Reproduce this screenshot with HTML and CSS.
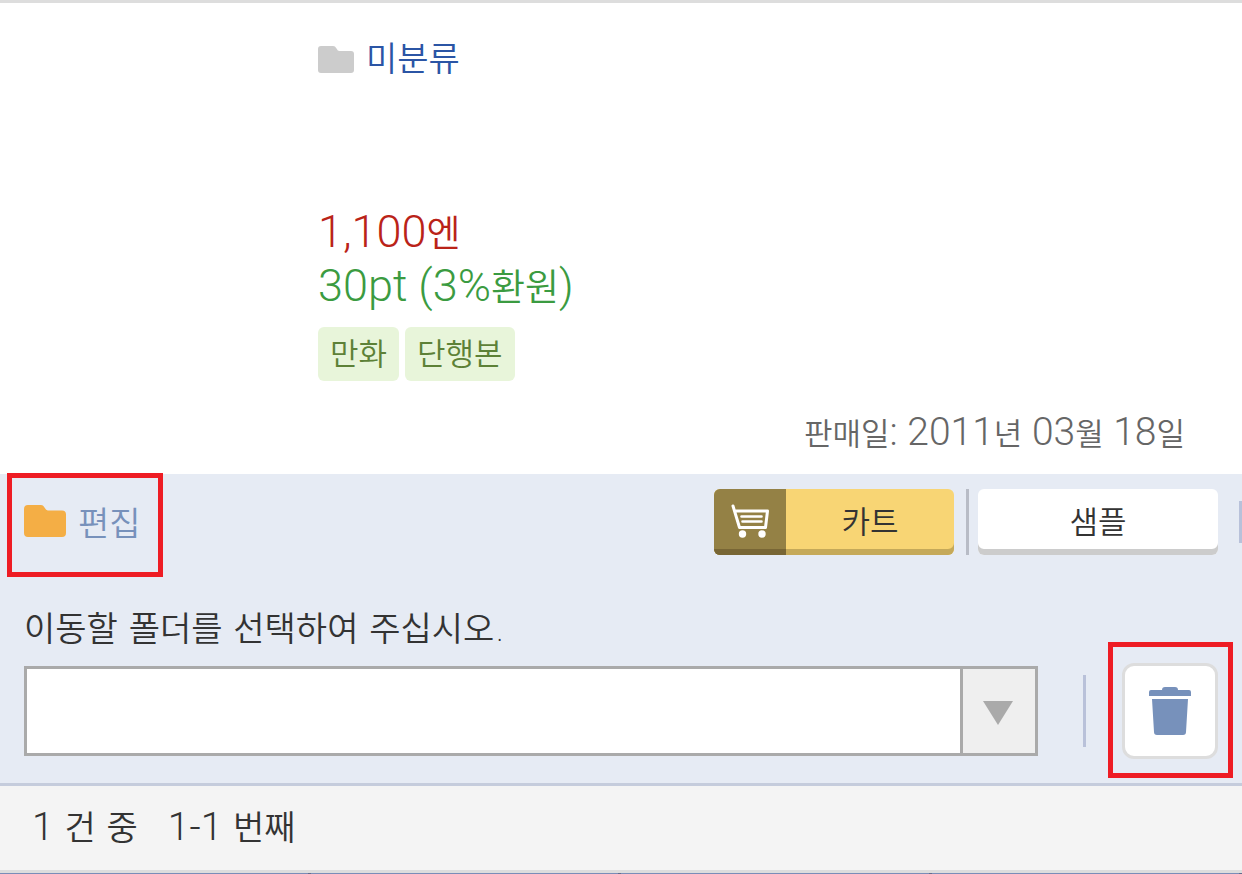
FILE: index.html
```
<!DOCTYPE html>
<html lang="ko">
<head>
  <meta charset="UTF-8">
  <meta name="viewport" content="width=device-width, initial-scale=1">
  <title>미분류</title>
  <link rel="stylesheet" href="styles.css">
</head>
<body>
  <main class="item">
    <div class="info">
      <a class="category" href="#">
        <svg width="36" height="27" viewBox="0 0 36 27"><path fill="#ccc" d="M3 0h12c1.500 0 2.500.8 3.500 2.500 1 1.700 1.500 2.500 3 2.500H33a3 3 0 0 1 3 3v16a3 3 0 0 1-3 3H3a3 3 0 0 1-3-3V3a3 3 0 0 1 3-3z"/></svg>
        <span>미분류</span>
      </a>
      <p class="price">1,100<span class="unit">엔</span></p>
      <p class="point">30pt (3%<span class="unit">환원</span>)</p>
      <div class="tags">
        <span class="tag">만화</span>
        <span class="tag">단행본</span>
      </div>
    </div>
    <p class="date"><span class="unit">판매일</span>: 2011<span class="unit">년</span> 03<span class="unit">월</span> 18<span class="unit">일</span></p>
  </main>

  <section class="panel">
    <div class="toolbar">
      <button class="edit-btn mark" type="button">
        <svg width="42" height="32" viewBox="0 0 42 32"><path fill="#f4ae45" d="M4 0h13c1.500 0 2.300.7 3.300 2.300C21.500 4.300 22.500 5.500 24 5.500h14a4 4 0 0 1 4 4V28a4 4 0 0 1-4 4H4a4 4 0 0 1-4-4V4a4 4 0 0 1 4-4z"/></svg>
        <span>편집</span>
      </button>
      <div class="actions">
        <button class="btn cart-btn" type="button">
          <span class="cart-icon">
            <svg width="38" height="34" viewBox="0 0 38 34" fill="none" stroke="#fff" stroke-linecap="round" stroke-linejoin="round">
              <path stroke-width="3" d="M2 2l6.500 21.500h26L36.500 7H5"/>
              <path stroke-width="2.600" d="M10.500 12.500h20M11.500 17.500h19"/>
              <circle cx="11.500" cy="30" r="3.700" fill="#fff" stroke="none"/>
              <circle cx="31" cy="30" r="3.700" fill="#fff" stroke="none"/>
            </svg>
          </span>
          <span class="btn-text">카트</span>
        </button>
        <span class="divider"></span>
        <button class="btn sample-btn" type="button">샘플</button>
      </div>
      <span class="edge"></span>
    </div>

    <label class="folder-label" for="folder">이동할 폴더를 선택하여 주십시오.</label>
    <div class="move-row">
      <div class="select-box">
        <select id="folder"><option></option></select>
        <span class="arrow"><svg width="30" height="24" viewBox="0 0 30 24"><path fill="#aaa" d="M0 0h30L15 24z"/></svg></span>
      </div>
      <span class="line"></span>
      <div class="trash-wrap mark">
        <button class="trash-btn" type="button" aria-label="삭제">
          <svg width="42" height="48" viewBox="0 0 42 48" fill="#7791bb"><path d="M2 3h11c0-2 1-3 3-3h10c2 0 3 1 3 3h11a2 2 0 0 1 2 2v4H0V5a2 2 0 0 1 2-2zM3 12h36l-2 33a3 3 0 0 1-3 3H8a3 3 0 0 1-3-3z"/></svg>
        </button>
      </div>
    </div>
  </section>

  <footer class="count"><span><span class="num">1</span> 건 중</span> <span><span class="num">1-1</span> 번째</span></footer>
  <nav class="tabs"><span></span><span></span><span></span><span></span></nav>
</body>
</html>
```
FILE: styles.css
```
* {
  box-sizing: border-box;
}

body {
  margin: 0;
  overflow-x: hidden;
  font-family: "DejaVu Sans", "Noto Sans CJK KR", sans-serif;
  font-weight: 350;
  color: #333;
  background: #fff;
}

p {
  margin: 0;
}

svg {
  display: block;
}

button {
  padding: 0;
  border: none;
  font: inherit;
  cursor: pointer;
}

.item {
  border-top: 3px solid #ddd;
  padding: 31px 57px 18px 318px;
}

.category {
  display: inline-flex;
  align-items: center;
  gap: 12px;
  height: 50px;
  font-size: 34px;
  line-height: 50px;
  color: #2b55a5;
  text-decoration: none;
}

.price,
.point {
  font-family: Roboto, "Noto Sans CJK KR", sans-serif;
  font-size: 45px;
  line-height: 54px;
}

.unit {
  font-size: 37px;
  line-height: 1;
}

.num {
  font-family: Roboto, sans-serif;
  font-size: 39px;
  line-height: 1;
}

.price {
  margin-top: 121px;
  color: #ba2318;
}

.point {
  color: #3b9b41;
}

.tags {
  display: flex;
  gap: 6px;
  margin-top: 14px;
}

.tag {
  padding: 0 12px;
  border-radius: 6px;
  font-size: 31px;
  line-height: 54px;
  color: #5d8137;
  background: #e8f5da;
}

.date {
  margin-top: 27px;
  font-family: Roboto, "Noto Sans CJK KR", sans-serif;
  font-size: 39px;
  line-height: 48px;
  text-align: right;
  color: #666;
}

.date .unit {
  font-size: 31px;
}

.panel {
  padding: 15px 24px 24px;
  border-bottom: 3px solid #c5ccdc;
  background: #e6ebf4;
}

.toolbar {
  position: relative;
  display: flex;
  justify-content: space-between;
}

.edit-btn {
  display: flex;
  align-items: center;
  gap: 12px;
  height: 64px;
  font-size: 34px;
  color: #7791bb;
  background: none;
}

.mark {
  position: relative;
}

.mark::after {
  content: "";
  position: absolute;
  border: 5px solid #ee1c24;
  pointer-events: none;
}

.edit-btn::after {
  inset: -16px -22px -24px -17px;
}

.actions {
  display: flex;
}

.btn {
  width: 240px;
  height: 66px;
  border-radius: 6px;
  font-size: 31px;
  color: #333;
  overflow: hidden;
}

.cart-btn {
  display: flex;
  background: #f8d574;
  box-shadow: inset 0 -6px #c5a959;
}

.cart-icon {
  display: flex;
  align-items: center;
  justify-content: center;
  width: 72px;
  height: 66px;
  padding-bottom: 3px;
  background: #948145;
  box-shadow: inset 0 -6px #786635;
}

.btn-text {
  flex: 1;
  line-height: 66px;
}

.divider {
  width: 3px;
  margin: 0 9px 0 12px;
  background: #b8bcc6;
}

.sample-btn {
  line-height: 66px;
  background: #fff;
  box-shadow: inset 0 -6px #ccc;
}

.edge {
  position: absolute;
  top: 12px;
  right: -24px;
  width: 3px;
  height: 42px;
  background: #b8c1da;
}

.folder-label {
  display: block;
  margin: 50px 0 10px;
  font-size: 34px;
  line-height: 48px;
}

.move-row {
  display: flex;
  align-items: center;
}

.select-box {
  position: relative;
  flex: 1;
  height: 90px;
}

.select-box select {
  width: 100%;
  height: 100%;
  padding: 0 90px 0 12px;
  border: 3px solid #aaa;
  border-radius: 0;
  font: inherit;
  font-size: 34px;
  background: #fff;
  appearance: none;
}

.arrow {
  position: absolute;
  top: 3px;
  right: 3px;
  bottom: 3px;
  display: flex;
  align-items: center;
  justify-content: center;
  width: 75px;
  padding: 4px 3px 0 0;
  border-left: 3px solid #aaa;
  background: #efefef;
  pointer-events: none;
}

.line {
  width: 3px;
  height: 72px;
  margin: 0 36px 0 45px;
  background: #b9c1d9;
}

.trash-wrap::after {
  inset: -21px -15px -19px -14px;
}

.trash-btn {
  display: flex;
  align-items: center;
  justify-content: center;
  width: 96px;
  height: 96px;
  border: 3px solid #ddd;
  border-radius: 12px;
  background: #fff;
}

.count {
  display: flex;
  gap: 30px;
  padding: 18px 32px;
  border-bottom: 3px solid #ddd;
  font-size: 34px;
  line-height: 48px;
  background: #f4f4f4;
}

.tabs {
  display: grid;
  grid-template-columns: repeat(4, 1fr);
  background: #7a8db8;
}

.tabs span {
  height: 1px;
  border-right: 3px solid #626a8c;
}
```
